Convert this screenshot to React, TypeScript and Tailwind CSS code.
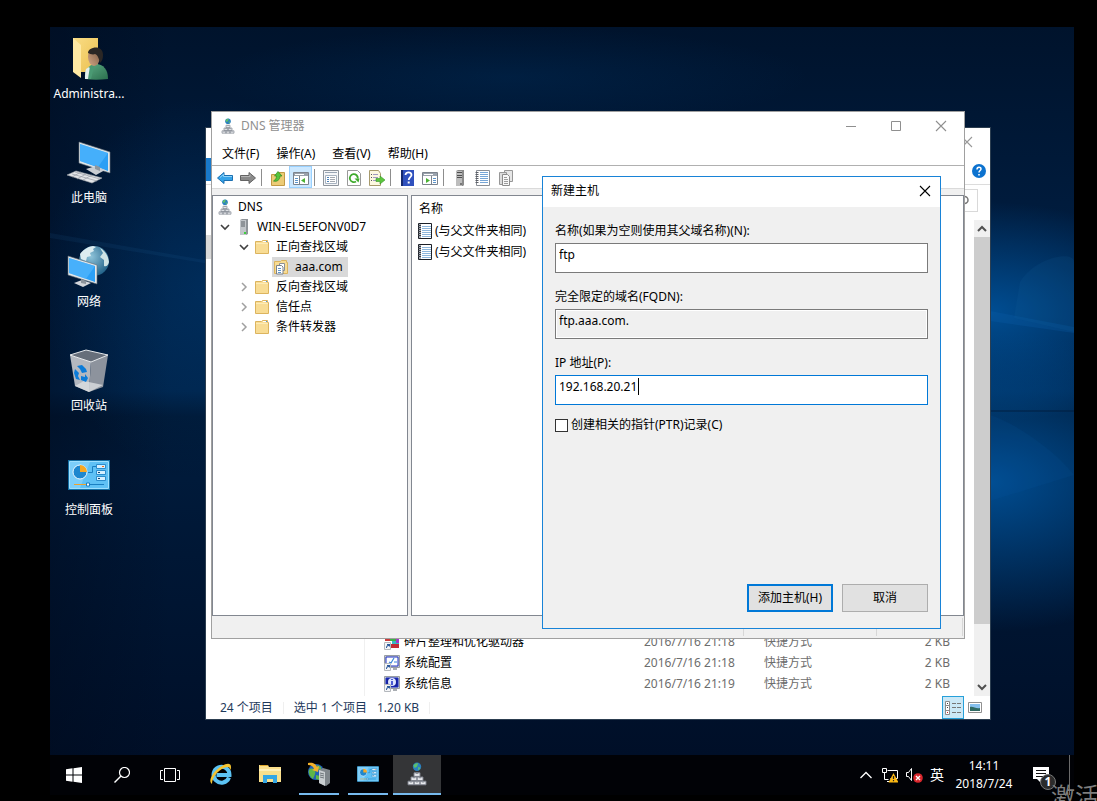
import type { ReactNode } from 'react';
import { clsx } from 'clsx';

type IconProps = { className?: string };

/* ---------- desktop icons ---------- */

function UserFolderIcon() {
  return (
    <svg viewBox="0 0 44 44" className="size-11">
      <defs>
        <linearGradient id="uf" x1="0" x2="1" y1="0" y2="1">
          <stop offset="0" stopColor="#f9dd86" />
          <stop offset="1" stopColor="#ecc04f" />
        </linearGradient>
        <linearGradient id="uj" x1="0" x2="1" y1="0" y2="1">
          <stop offset="0" stopColor="#5fae86" />
          <stop offset="1" stopColor="#2a6e4d" />
        </linearGradient>
        <linearGradient id="us" x1="0" x2="1" y1="1" y2="0">
          <stop offset="0" stopColor="#d3a786" />
          <stop offset="1" stopColor="#77563f" />
        </linearGradient>
      </defs>
      <path d="M6 1h25v34H6z" fill="url(#uf)" />
      <path d="M6 1l8 7v33l-8-6z" fill="#ffe9a3" />
      <path d="M18 42c-1-8 3-14 10-15 9 0 13 6 13 15-8 1-16 1-23 0z" fill="url(#uj)" />
      <path d="M19 32l3-2 3 4-2 8h-5c0-4 0-7 1-10z" fill="#e4f0ee" />
      <path d="M23 29l5-3-4 16h-3z" fill="#4a9a73" />
      <ellipse cx="27" cy="20" rx="6" ry="9" fill="url(#us)" />
      <path d="M21 16c0-6 15-9 15 2 0 4-1 6-3 8-1-4-2-8-5-9-2 1-5 0-7-1z" fill="#2b2725" />
    </svg>
  );
}

function ComputerIcon() {
  return (
    <svg viewBox="0 0 44 44" className="size-11">
      <path d="M12 1l31 10v21L12 22z" fill="#dfe6ea" stroke="#6b7780" strokeWidth=".6" />
      <path d="M13 3l28 9v18L13 20z" fill="#2b9ff5" />
      <path d="M13 3l28 9-10 14-18-6z" fill="#5bbcff" opacity=".55" />
      <path d="M19 28l10-3 9 4-9 5z" fill="#c9cdd2" />
      <path d="M28 24l5 2v4l-5-2z" fill="#8f979e" />
      <path d="M0 34l9-4 26 7-10 5z" fill="#e3e5e8" stroke="#9da2a8" strokeWidth=".6" />
      <path d="M5 33l25 7M8 31l25 7M10 38l9-5M16 39l9-5M5 36l9-5" stroke="#999ea6" strokeWidth=".7" />
    </svg>
  );
}

function NetworkIcon() {
  return (
    <svg viewBox="0 0 44 44" className="size-11">
      <defs>
        <radialGradient id="gl" cx=".4" cy=".35" r=".7">
          <stop offset="0" stopColor="#8fc4da" />
          <stop offset="1" stopColor="#1f5f86" />
        </radialGradient>
      </defs>
      <circle cx="27" cy="16" r="15" fill="url(#gl)" />
      <path d="M13 9c3-4 7-7 13-8l3 1-3 2 1 2-4 2 1 3-4 1-1 4-5-2z" fill="#dcecf0" />
      <path d="M33 3c5 3 8 7 9 14-1 4-3 5-5 4v-6l-4-3 3-4z" fill="#cfe4e6" />
      <path d="M1 11l29 9v19L1 30z" fill="#e2e7ea" stroke="#5f6b75" strokeWidth=".6" />
      <path d="M2 13l26 8v16L2 28z" fill="#2ba0f7" />
      <path d="M2 13l26 8-9 13-17-6z" fill="#63bfff" opacity=".5" />
      <path d="M7 38l8-3 9 3-8 4z" fill="#d3d6da" />
      <path d="M14 34l5 2v3l-5-1z" fill="#8d959c" />
    </svg>
  );
}

function RecycleBinIcon() {
  return (
    <svg viewBox="0 0 44 44" className="size-11">
      <path d="M3 6l21 6-2 31L8 37z" fill="#b4b8bf" />
      <path d="M24 12l17-6-5 32-14 5z" fill="#8d939d" />
      <path d="M3 6L19 1l22 5-17 7z" fill="#666e7a" stroke="#e6e9ec" strokeWidth="1" />
      <path d="M8 37l9-5 19 4-14 7z" fill="#dcdee1" opacity=".8" />
      <g fill="#0b7bd8">
        <path d="M10 17l5-1 4 4 1 3-5 1-2-4z" />
        <path d="M8 20l4 4-1 3 2 4-4-1-2-6z" />
        <path d="M14 27l4 1v-3l3 4-2 4-5-2z" />
      </g>
    </svg>
  );
}

function ControlPanelIcon({ className }: IconProps) {
  return (
    <svg viewBox="0 0 42 30" className={className}>
      <path d="M0 0h42v30H0z" fill="#1570a5" />
      <path d="M1.500 1.500h39v27h-39z" fill="#5fc1f5" stroke="#9fe0ff" />
      <path d="M2 2h20L12 28H2z" fill="#9adcff" opacity=".5" />
      <circle cx="12" cy="12" r="7" fill="#1e87cf" stroke="#eef8ff" />
      <path d="M12 12V5a7 7 0 0 1 7 7z" fill="#f7a823" />
      <path d="M20 12.500h4.500v-6H28" fill="none" stroke="#1a7fc2" />
      <path d="M28.500 4.500h9v4h-9zM28.500 10.500h9v4h-9zM28.500 16.500h9v4h-9z" fill="#d6f0ff" stroke="#2b8ccc" />
      <path d="M34 6h2v1h-2z" fill="#f26a1b" />
      <path d="M30 12h2v1h-2zM30 18h2v1h-2z" fill="#174a75" />
      <path d="M6 24.500h13" stroke="#f0a22a" />
      <path d="M21 24.500h15" stroke="#1a7fc2" />
      <path d="M18.500 23h3v3h-3z" fill="#fff" stroke="#1a7fc2" />
    </svg>
  );
}

/* ---------- small icons ---------- */

function DnsIcon({ className }: IconProps) {
  return (
    <svg viewBox="0 0 16 20" className={className}>
      <circle cx="8" cy="4" r="3.500" fill="#2a7fc0" />
      <path d="M5 3c1-2 3-2 4-2l-1 3-2 1zM9 4l2 1-2 2z" fill="#5cc06a" />
      <g fill="#e6e8ec" stroke="#7d828c" strokeWidth=".8">
        <path d="M5.500 9h5v3h-5zM3 12.500h5v3H3zM8 12.500h5v3H8zM.500 16h5v3h-5zM5.500 16h5v3h-5zM10.500 16h5v3h-5z" />
      </g>
      <path d="M7 9h2v1H7zM4.500 12.500h2v1h-2zM9.500 12.500h2v1h-2zM2 16h2v1H2zM7 16h2v1H7zM12 16h2v1h-2z" fill="#8c919a" />
    </svg>
  );
}

function ServerIcon({ className }: IconProps) {
  return (
    <svg viewBox="0 0 10 16" className={className}>
      <path d="M1 1l2-1h6v15l-2 1H1z" fill="#8f9499" />
      <path d="M1 1h6v15H1z" fill="#c2c6ca" />
      <path d="M2 3h4M2 5h4M2 7h4" stroke="#5d6368" />
      <path d="M5 13h2v2H5z" fill="#3ecf3e" />
    </svg>
  );
}

function FolderIcon() {
  return (
    <svg viewBox="0 0 16 16" className="size-4">
      <path d="M1.500 2.500h6l1-1h5v2h1v11h-13z" fill="#f8dc94" stroke="#dcb45e" />
      <path d="M9 2.500h4" stroke="#fff" />
      <path d="M12 2.500h1" stroke="#4f93d4" />
      <path d="M2 4.500h12" stroke="#fdebb6" />
    </svg>
  );
}

function ZoneIcon() {
  return (
    <svg viewBox="0 0 16 16" className="size-4">
      <path d="M1.500 2.500h6l1-1h5v2h1v11h-13z" fill="#f8dc94" stroke="#dcb45e" />
      <path d="M6.500 4.500h5v7h-5z" fill="#fff" stroke="#8a8f96" />
      <path d="M3.500 6.500h5l1.500 1.500v7H3.500z" fill="#fff" stroke="#7c828a" />
      <path d="M5 9.500h3M5 11.500h3M5 13.500h3" stroke="#5f94c8" />
    </svg>
  );
}

function NotebookIcon({ className }: IconProps) {
  return (
    <svg viewBox="0 0 16 16" className={className}>
      <path d="M1.500.500h13v15h-13z" fill="#fff" stroke="#1b1f27" />
      <path d="M2 1h2v14H2z" fill="#a8adb5" />
      <path d="M1 2.500h3M1 4.500h3M1 6.500h3M1 8.500h3M1 10.500h3M1 12.500h3" stroke="#3c4048" />
      <path d="M5 3.500h9M5 5.500h9M5 7.500h9M5 9.500h9M5 11.500h9M5 13.500h9" stroke="#8db6dc" />
    </svg>
  );
}

function Chevron({ open }: { open: boolean }) {
  return (
    <svg viewBox="0 0 10 10" className="size-2.5">
      {open ? (
        <path d="M1 3l4 4 4-4" fill="none" stroke="#404040" strokeWidth="1.600" />
      ) : (
        <path d="M3 1l4 4-4 4" fill="none" stroke="#a0a0a0" strokeWidth="1.500" />
      )}
    </svg>
  );
}

function CloseIcon({ className }: IconProps) {
  return (
    <svg viewBox="0 0 12 12" className={clsx('size-3', className)}>
      <path d="M1 1l10 10M11 1L1 11" stroke="currentColor" strokeWidth="1.100" />
    </svg>
  );
}

/* ---------- toolbar ---------- */

const toolbarIcons: Record<string, ReactNode> = {
  back: (
    <>
      <path d="M.500 8L7 2.500v3h8.500v5H7v3z" fill="#35a3e8" stroke="#1c6fb0" />
      <path d="M3 7.500L6.500 4.500v2H15" fill="none" stroke="#8fd3f8" />
    </>
  ),
  forward: (
    <>
      <path d="M15.500 8L9 2.500v3H.500v5H9v3z" fill="#8a8a8a" stroke="#636363" />
      <path d="M1 6.500h9v-2" fill="none" stroke="#b5b5b5" />
    </>
  ),
  up: (
    <>
      <path d="M1.500 4.500h6l1-2h6v13h-13z" fill="#eccb76" stroke="#c29a45" />
      <path d="M3.500 11c2-1 3-3 3-5h-2L8 1.500 12 6h-2c0 4-3 6-6.500 5z" fill="#55c43b" stroke="#2f8a21" strokeWidth=".7" />
    </>
  ),
  tree: (
    <>
      <path d="M.500 2.500h15v12H.500z" fill="#fff" stroke="#7c838d" />
      <path d="M1 3h14v3H1z" fill="#9aa2ac" />
      <path d="M2 4.500h9" stroke="#fff" />
      <path d="M6.500 6v9" stroke="#7c838d" />
      <path d="M2 8.500h3M2 10.500h3M2 12.500h3" stroke="#5e94c9" />
      <path d="M12 8v5l-4-2.500z" fill="#4bb233" />
    </>
  ),
  props: (
    <>
      <path d="M.500.500h15v15H.500z" fill="#f5f6f8" stroke="#8f959d" />
      <path d="M2 2.500h12" stroke="#9aa6b5" />
      <path d="M2.500 5.500h11v8h-11z" fill="#fff" stroke="#a8b3c0" />
      <path d="M4 7.500h2M4 9.500h2M4 11.500h2" stroke="#4b80b8" />
      <path d="M7 7.500h5M7 9.500h5M7 11.500h5" stroke="#a3a8b0" />
    </>
  ),
  refresh: (
    <>
      <path d="M1.500.500h10l3 3v12h-13z" fill="#fff" stroke="#9a9a9a" />
      <path d="M10 11.500a4 4 0 1 1 1.800-3" fill="none" stroke="#3fab2c" strokeWidth="1.800" />
      <path d="M8.500 8.500h5l-1 4z" fill="#3fab2c" />
    </>
  ),
  exportList: (
    <>
      <path d="M.500.500h9l2 3v12H.500z" fill="#fdf8e1" stroke="#a79a6c" />
      <path d="M2 4.500h1M2 7.500h1M2 10.500h1" stroke="#55585e" />
      <path d="M4 4.500h5M4 7.500h5M4 10.500h5" stroke="#a09ac0" />
      <path d="M7 8.500h4V6l5 4-5 4v-2.500H7z" fill="#5cc63e" stroke="#38962a" strokeWidth=".6" />
    </>
  ),
  help: (
    <>
      <path d="M2 0h13v16H2z" fill="#2f50bd" />
      <path d="M2 0h2v16H2z" fill="#15296f" />
      <path d="M6.500 5c0-3.500 6-3.500 6 0 0 2-2.800 2.500-2.800 5" fill="none" stroke="#fff" strokeWidth="1.800" />
      <path d="M8.700 11.500h2v2h-2z" fill="#fff" />
    </>
  ),
  pane: (
    <>
      <path d="M.500 2.500h15v12H.500z" fill="#fff" stroke="#7c838d" />
      <path d="M1 3h14v3H1z" fill="#9aa2ac" />
      <path d="M2 4.500h9" stroke="#fff" />
      <path d="M9.500 6v9" stroke="#7c838d" />
      <path d="M11 8.500h3M11 10.500h3M11 12.500h3" stroke="#5e94c9" />
      <path d="M4 8v5l4-2.500z" fill="#4bb233" />
    </>
  ),
  server: (
    <>
      <path d="M4 1l2-1h6v15l-1 1H4z" fill="#8b8b8b" />
      <path d="M4 1h6v15H4z" fill="#bdbdbd" />
      <path d="M5 2.500h5M5 5.500h5M5 7.500h5" stroke="#4e4e4e" />
      <path d="M8 13h2v2H8z" fill="#777" />
    </>
  ),
  list: (
    <>
      <path d="M1.500.500h13v15h-13z" fill="#fff" stroke="#8b8f96" />
      <path d="M.500 2.500h3M.500 4.500h3M.500 6.500h3M.500 8.500h3M.500 10.500h3M.500 12.500h3" stroke="#5a5e66" />
      <path d="M5 2.500h8M5 4.500h8M5 6.500h8M5 8.500h8M5 10.500h8M5 12.500h8" stroke="#78a6d6" />
    </>
  ),
  copy: (
    <>
      <path d="M6.500.500h8v11h-8z" fill="#e6e6e6" stroke="#979797" />
      <path d="M1.500 2.500h7v12h-7z" fill="#dcdcdc" stroke="#979797" />
      <path d="M4.500 4.500h5l2 2v9h-7z" fill="#f8f8f8" stroke="#8c8c8c" />
      <path d="M6 7.500h3M6 9.500h4M6 11.500h4M6 13.500h4" stroke="#9d9d9d" />
    </>
  ),
};

const toolbarGroups = [
  [
    { id: 'back', title: '后退' },
    { id: 'forward', title: '前进' },
  ],
  [
    { id: 'up', title: '向上' },
    { id: 'tree', title: '显示/隐藏控制台树', active: true },
  ],
  [
    { id: 'props', title: '属性' },
    { id: 'refresh', title: '刷新' },
    { id: 'exportList', title: '导出列表' },
  ],
  [
    { id: 'help', title: '帮助' },
    { id: 'pane', title: '显示/隐藏操作窗格' },
  ],
  [
    { id: 'server', title: '服务器' },
    { id: 'list', title: '列表' },
    { id: 'copy', title: '复制' },
  ],
];

/* ---------- data ---------- */

const desktopIcons = [
  { label: 'Administra...', icon: <UserFolderIcon /> },
  { label: '此电脑', icon: <ComputerIcon /> },
  { label: '网络', icon: <NetworkIcon /> },
  { label: '回收站', icon: <RecycleBinIcon /> },
  { label: '控制面板', icon: <ControlPanelIcon className="h-[30px] w-[42px]" /> },
];

const zones = [
  { label: '反向查找区域' },
  { label: '信任点' },
  { label: '条件转发器' },
];

const files = [
  { name: '碎片整理和优化驱动器', date: '2016/7/16 21:18', type: '快捷方式', size: '2 KB', icon: 'defrag' },
  { name: '系统配置', date: '2016/7/16 21:18', type: '快捷方式', size: '2 KB', icon: 'config' },
  { name: '系统信息', date: '2016/7/16 21:19', type: '快捷方式', size: '2 KB', icon: 'info' },
];

function ShortcutIcon({ kind }: { kind: string }) {
  return (
    <svg viewBox="0 0 16 16" className="size-4">
      {kind === 'defrag' ? (
        <>
          <path d="M1 1h7v6H1z" fill="#c93a3a" />
          <path d="M6 3h8v4H6z" fill="#3fae49" />
          <path d="M8 7h7v3H8z" fill="#38b7c4" />
          <path d="M12 4h3v5h-3z" fill="#a238c9" />
          <path d="M7 10h8v4H7z" fill="#c22a35" />
        </>
      ) : (
        <>
          <path d="M.500.500h15v12H.500z" fill="#c8ccd0" stroke="#989da3" />
          <path d="M2 2h12v9H2z" fill={kind === 'config' ? '#fff' : '#15209c'} stroke="#1c2fc4" />
          <path d="M9 13h4v2H9z" fill="#a9adb2" />
          {kind === 'config' ? (
            <path d="M5 7l2 1 3-5M10 7h3" fill="none" stroke="#3a86d8" strokeWidth="1.200" />
          ) : (
            <>
              <circle cx="8" cy="6" r="4" fill="#dfe6ff" />
              <path d="M8 3v1M8 5v4" stroke="#1c2fc4" strokeWidth="1.500" />
            </>
          )}
        </>
      )}
      <path d="M.500 8.500h6v7h-6z" fill="#f4f5f7" stroke="#b4b8bd" />
      <path d="M2 14c0-2 1-3 2-3H3v-1h3v3l-1-1c-2 0-2 1-2 2z" fill="#2b5a9c" />
    </svg>
  );
}

/* ---------- windows ---------- */

function ExplorerWindow() {
  return (
    <section
      aria-label="管理工具"
      className="absolute top-[100px] left-[155px] flex h-[593px] w-[786px] flex-col border border-[#2c3e50] bg-white"
    >
      <div className="flex h-7 items-center justify-end pr-[17px]">
        <button type="button" aria-label="关闭" className="text-[#999]">
          <CloseIcon />
        </button>
      </div>
      <div className="flex h-[29px] items-start justify-between border-b border-[#dcdcdc] pt-0.5 pr-1">
        <div className="h-[23px] w-14 bg-[#1979ca]" />
        <button type="button" aria-label="帮助" className="pt-1.5">
          <svg viewBox="0 0 14 14" className="size-3.5">
            <circle cx="7" cy="7" r="7" fill="#0c72cf" />
            <path d="M5 5.500c0-3 4-3 4-.500C9 6.500 7 6.500 7 8.500" fill="none" stroke="#fff" strokeWidth="1.500" />
            <path d="M6.200 10h1.600v1.500H6.200z" fill="#fff" />
          </svg>
        </button>
      </div>
      <div className="flex h-[35px] justify-end pt-1 pr-3">
        <div className="flex h-[23px] w-40 items-center justify-end border border-[#d9d9d9] pr-2">
          <svg viewBox="0 0 12 12" className="size-3">
            <circle cx="7.500" cy="5" r="3.500" fill="none" stroke="#777" strokeWidth="1.500" />
            <path d="M5 7.500L1 11" stroke="#777" strokeWidth="1.500" />
          </svg>
        </div>
      </div>

      <div className="flex min-h-0 flex-1">
        <div className="w-[159px] border-r border-[#f0f0f0] pt-[15px]">
          <div className="h-6 bg-[#d9d9d9]" />
        </div>
        <div className="flex flex-1 flex-col justify-end pr-6 pb-0.5 pl-[19px]">
          <table className="w-full table-fixed text-left">
            <tbody>
              {files.map((file) => (
                <tr key={file.name} className="h-[21px] text-[#6d6d6d]">
                  <td className="p-0 text-black">
                    <div className="flex items-center gap-1 whitespace-nowrap">
                      <ShortcutIcon kind={file.icon} />
                      {file.name}
                    </div>
                  </td>
                  <td className="w-[120px] p-0 whitespace-nowrap">{file.date}</td>
                  <td className="w-[110px] p-0">{file.type}</td>
                  <td className="w-[76px] p-0 text-right">{file.size}</td>
                </tr>
              ))}
            </tbody>
          </table>
        </div>
        <div className="flex w-4 flex-col items-center bg-[#f0f0f0]">
          <svg viewBox="0 0 10 10" className="mt-1 mb-[3px] size-2.5">
            <path d="M1 7l4-4 4 4" fill="none" stroke="#505050" strokeWidth="2" />
          </svg>
          <div className="h-[387px] w-full bg-[#cdcdcd]" />
          <svg viewBox="0 0 10 10" className="mt-auto mb-1 size-2.5">
            <path d="M1 3l4 4 4-4" fill="none" stroke="#505050" strokeWidth="2" />
          </svg>
        </div>
      </div>

      <div className="flex h-[23px] items-center pl-3.5 text-[#1e395b]">
        <span>24 个项目</span>
        <span className="mx-2.5 h-3 border-l border-[#efefef]" />
        <span>选中 1 个项目</span>
        <span className="ml-2.5">1.20 KB</span>
        <span className="mx-2.5 h-3 border-l border-[#efefef]" />
        <div className="ml-auto flex h-full items-center gap-1 pr-2">
          <button
            type="button"
            aria-label="详细信息"
            className="grid h-full w-[22px] place-items-center border border-[#26a0da] bg-[#cbe8f6]"
          >
            <svg viewBox="0 0 16 14" className="h-3.5 w-4">
              <path d="M.500.500h4v13h-4zM.500 4.500h4M.500 9.500h4" fill="#fff" stroke="#8b8b8b" />
              <path d="M2 2h1v1H2zM2 6h1v1H2z" fill="#444" />
              <path d="M2 11h1v1H2z" fill="#c22" />
              <path d="M7 2.500h4M12 2.500h4M7 6.500h4M12 6.500h4M7 11.500h4M12 11.500h4" stroke="#777" />
            </svg>
          </button>
          <button type="button" aria-label="大图标">
            <svg viewBox="0 0 14 11" className="h-[11px] w-3.5">
              <path d="M.500.500h13v10H.500z" fill="#fff" stroke="#909090" />
              <path d="M2 2h10v7H2z" fill="#86c0ee" />
              <path d="M2 5c3-1 6 2 10 1v3H2z" fill="#2f6a63" />
            </svg>
          </button>
        </div>
      </div>
    </section>
  );
}

function DnsManagerWindow() {
  return (
    <section
      aria-label="DNS 管理器"
      className="absolute top-[84px] left-[161px] flex h-[528px] w-[754px] flex-col border border-[#a0a0a0] bg-[#f0f0f0]"
    >
      <header className="flex h-7 items-center bg-white pr-[17px] pl-2">
        <DnsIcon className="h-4 w-4" />
        <h1 className="pl-[5px] text-[#8f8f8f]">DNS 管理器</h1>
        <div className="ml-auto flex items-center gap-[33px] text-[#8f8f8f]">
          <button type="button" aria-label="最小化">
            <svg viewBox="0 0 12 12" className="size-3">
              <path d="M1 6.500h10" stroke="currentColor" />
            </svg>
          </button>
          <button type="button" aria-label="最大化">
            <svg viewBox="0 0 12 12" className="size-3">
              <path d="M1.500 1.500h9v9h-9z" fill="none" stroke="currentColor" />
            </svg>
          </button>
          <button type="button" aria-label="关闭">
            <CloseIcon />
          </button>
        </div>
      </header>

      <nav className="flex h-[26px] items-center gap-[17px] border-b border-[#b0b0b0] bg-white pt-0.5 pl-2.5">
        <button type="button">文件(F)</button>
        <button type="button">操作(A)</button>
        <button type="button">查看(V)</button>
        <button type="button">帮助(H)</button>
      </nav>

      <div className="flex h-[23px] items-center border-b border-[#dadada] bg-white pl-px">
        {toolbarGroups.map((group, index) => (
          <div key={index} className="flex items-center">
            {index > 0 && <span className="mr-1 ml-0.5 h-[17px] w-px bg-[#8d8d8d]" />}
            {group.map((item) => (
              <button
                key={item.id}
                type="button"
                title={item.title}
                className={clsx(
                  'flex h-[22px] w-[23px] justify-center border pt-[3px]',
                  item.active ? 'border-[#99d1ff] bg-[#cce8ff]' : 'border-transparent',
                )}
              >
                <svg viewBox="0 0 16 16" className="size-4">
                  {toolbarIcons[item.id]}
                </svg>
              </button>
            ))}
          </div>
        ))}
      </div>

      <div className="flex min-h-0 flex-1 gap-[3px] pt-1.5">
        <ul className="w-[196px] border border-[#828790] bg-white pt-px">
          <li className="flex h-5 items-center gap-[5px] pl-1">
            <DnsIcon className="h-4 w-4" />
            DNS
          </li>
          <li className="flex h-5 items-center pl-[7px]">
            <Chevron open />
            <ServerIcon className="ml-[9px] h-4 w-2.5" />
            <span className="pl-2">WIN-EL5EFONV0D7</span>
          </li>
          <li className="flex h-5 items-center pl-[26px]">
            <Chevron open />
            <span className="pl-[5px]">
              <FolderIcon />
            </span>
            <span className="pl-1.5">正向查找区域</span>
          </li>
          <li className="flex h-5 pl-[59px]">
            <span className="flex items-center gap-1.5 bg-[#d9d9d9] pr-[5px] pl-px">
              <ZoneIcon />
              aaa.com
            </span>
          </li>
          {zones.map((zone) => (
            <li key={zone.label} className="flex h-5 items-center pl-[26px]">
              <Chevron open={false} />
              <span className="pl-[5px]">
                <FolderIcon />
              </span>
              <span className="pl-1.5">{zone.label}</span>
            </li>
          ))}
        </ul>

        <div className="flex-1 border border-[#828790] bg-white pt-px">
          <div className="flex h-6 items-center pl-[7px]">名称</div>
          {[0, 1].map((row) => (
            <div key={row} className="flex h-[21px] items-start gap-0.5 pt-0.5 pl-[5px]">
              <NotebookIcon className="size-4" />
              (与父文件夹相同)
            </div>
          ))}
        </div>
      </div>

      <footer className="flex h-[22px] justify-end py-0.5 pr-px">
        <div className="w-[133px] border-l border-[#d7d7d7]" />
        <div className="w-[87px] border-x border-[#d7d7d7]" />
      </footer>
    </section>
  );
}

function NewHostDialog() {
  return (
    <form
      aria-label="新建主机"
      className="absolute top-[149px] left-[492px] flex h-[453px] w-[399px] flex-col border border-[#1883d7] bg-[#f0f0f0]"
    >
      <header className="flex h-[30px] items-center justify-between bg-white pr-[9px] pb-0.5 pl-2">
        <h2>新建主机</h2>
        <button type="button" aria-label="关闭">
          <CloseIcon />
        </button>
      </header>

      <div className="flex flex-1 flex-col px-3 pt-4 pb-4">
        <div className="flex h-[66px] flex-col">
          <label htmlFor="host" className="h-5 leading-4">
            名称(如果为空则使用其父域名称)(N):
          </label>
          <input id="host" defaultValue="ftp" className="h-[30px] border border-[#7a7a7a] bg-white px-[3px] pb-2" />
        </div>
        <div className="flex h-[66px] flex-col">
          <label htmlFor="fqdn" className="h-5 leading-4">
            完全限定的域名(FQDN):
          </label>
          <input
            id="fqdn"
            readOnly
            value="ftp.aaa.com."
            className="h-[30px] border border-[#7a7a7a] bg-[#f0f0f0] px-[3px] pb-2 inset-ring inset-ring-white"
          />
        </div>
        <div className="flex h-[62px] flex-col">
          <label htmlFor="ip" className="h-5 leading-4">
            IP 地址(P):
          </label>
          <div className="relative flex">
            <input
              id="ip"
              defaultValue="192.168.20.21"
              className="h-[30px] w-full border border-[#0078d7] bg-white px-[3px] pb-2"
            />
            <span className="absolute top-[3px] left-[83px] h-[17px] w-px bg-black" />
          </div>
        </div>
        <label className="flex items-center gap-[3px] leading-4">
          <input type="checkbox" className="size-[13px] appearance-none border border-[#333] bg-white" />
          创建相关的指针(PTR)记录(C)
        </label>

        <div className="mt-auto flex justify-end gap-[9px]">
          <button type="submit" className="h-7 w-[86px] border-2 border-[#0078d7] bg-[#e1e1e1]">
            添加主机(H)
          </button>
          <button type="button" className="h-7 w-[86px] border border-[#adadad] bg-[#e1e1e1]">
            取消
          </button>
        </div>
      </div>
    </form>
  );
}

/* ---------- taskbar ---------- */

const launchers = [
  {
    title: 'Internet Explorer',
    state: '',
    icon: (
      <svg viewBox="0 0 24 24" className="size-6">
        <path
          d="M20 15.500A8 8 0 1 1 20.500 13H7.500"
          fill="none"
          stroke="#5cc3f4"
          strokeWidth="4"
        />
        <path d="M3 22C-2 19 5 8 13 4c5-3 9-3 9 1 0 1 0 2-1 3 0-4-3-3-6-2C8 9 3 16 3 22z" fill="#f5c430" />
      </svg>
    ),
  },
  {
    title: '文件资源管理器',
    state: '',
    icon: (
      <svg viewBox="0 0 22 20" className="h-5 w-[22px]">
        <path d="M0 1h9l1 2h12v15H0z" fill="#fbe08c" />
        <path d="M1 1h8v1H1z" fill="#e0a92f" />
        <path d="M0 5h22v2H0z" fill="#fff0b8" />
        <path d="M4 11h14v8h-4v-4H8v4H4z" fill="#36a7e4" />
      </svg>
    ),
  },
  {
    title: '服务器管理器',
    state: 'running',
    icon: (
      <svg viewBox="0 0 24 24" className="size-6">
        <circle cx="9" cy="10" r="8" fill="#2261b5" />
        <path d="M2 8c2-2 5-2 6 1s-1 5-2 8c-3-2-5-6-4-9zM9 13l4 1-1 4-3-1zM10 3l4 2v3l-4-1z" fill="#5fb548" />
        <path d="M1 1c5-1 8 1 9 4l2-1-1 6-6-2 2-1C6 4 4 3 1 3z" fill="#f2b12b" />
        <path d="M12 8l4-2 7 2v13l-4 3-7-3z" fill="#7f868b" />
        <path d="M12 8l6 2v14l-6-3z" fill="#c9ced1" />
        <path d="M13 11l4 1M13 13l4 1M13 15l4 1" stroke="#6f767b" />
      </svg>
    ),
  },
  { title: '管理工具', state: 'running', icon: <ControlPanelIcon className="h-4 w-[22px]" /> },
  { title: 'DNS', state: 'active', icon: <DnsIcon className="h-6 w-5" /> },
];

function Taskbar() {
  return (
    <footer className="flex h-10 items-stretch bg-[#010206] text-white">
      <button type="button" aria-label="开始" className="grid w-12 place-items-center">
        <svg viewBox="0 0 16 16" className="size-4">
          <path d="M0 2.300l6.500-1v6.200H0zM7.500 1.200L16 0v7.500H7.500zM0 8.500h6.500v6.200l-6.500-1zM7.500 8.500H16V16l-8.500-1.200z" fill="#fff" />
        </svg>
      </button>
      <button type="button" aria-label="搜索" className="grid w-12 place-items-center">
        <svg viewBox="0 0 16 16" className="size-4">
          <circle cx="10.500" cy="5.500" r="5" fill="none" stroke="#fff" strokeWidth="1.200" />
          <path d="M7 9L.500 15.500" stroke="#fff" strokeWidth="1.400" />
        </svg>
      </button>
      <button type="button" aria-label="任务视图" className="grid w-12 place-items-center">
        <svg viewBox="0 0 20 16" className="h-4 w-5">
          <path d="M4.500 1.500h11v13h-11zM3 3.500H.500v9H3M17 3.500h2.500v9H17" fill="none" stroke="#fff" />
        </svg>
      </button>
      <div className="flex gap-px pl-[3px]">
        {launchers.map((app) => (
          <button
            key={app.title}
            type="button"
            title={app.title}
            className={clsx('flex w-12 flex-col items-center', app.state === 'active' && 'bg-[#343537]')}
          >
            <span className="flex flex-1 items-center">{app.icon}</span>
            <span
              className={clsx(
                'h-0.5',
                app.state === 'active' ? 'w-12' : 'w-10',
                app.state && 'bg-[#76b9ed]',
              )}
            />
          </button>
        ))}
      </div>

      <div className="ml-auto flex items-center">
        <button type="button" aria-label="显示隐藏的图标">
          <svg viewBox="0 0 12 8" className="h-2 w-3">
            <path d="M.500 7L6 1.500 11.500 7" fill="none" stroke="#fff" strokeWidth="1.300" />
          </svg>
        </button>
        <svg viewBox="0 0 16 16" className="ml-2.5 size-4">
          <path d="M5.500 3.500h10v8h-7M.500 1.500h4v4h-4zM2.500 5.500v7h4M5 14.500h4" fill="none" stroke="#fff" />
          <path d="M11.500 6l5 9.500h-10z" fill="#fdb913" />
          <path d="M11.500 9v3M11.500 13v1.200" stroke="#222" strokeWidth="1.200" />
        </svg>
        <svg viewBox="0 0 17 16" className="ml-2 h-4 w-[17px]">
          <path d="M.500 5.500h2l3-4v12l-3-4h-2z" fill="none" stroke="#fff" />
          <circle cx="12" cy="11" r="4.800" fill="#d9262c" />
          <path d="M10 9l4 4M14 9l-4 4" stroke="#fff" strokeWidth="1.300" />
        </svg>
        <span className="ml-[7px] text-sm">英</span>
        <div className="ml-2 w-[64px] text-center leading-[18px] whitespace-nowrap">
          <div>14:11</div>
          <div>2018/7/24</div>
        </div>
        <div className="relative ml-[17px]">
          <svg viewBox="0 0 16 16" className="size-4">
            <path d="M0 0h16v12H8v4l-4-4H0z" fill="#fff" />
            <path d="M3 3.500h10M3 6.500h10M3 9.500h7" stroke="#111" />
          </svg>
          <span className="absolute top-[7px] left-[7px] grid size-4 place-items-center rounded-full border border-[#777] bg-[#2b2b2b] leading-none font-bold">
            1
          </span>
        </div>
        <div className="mr-1 ml-5 h-10 border-l border-[#6b6b6b]" />
      </div>
    </footer>
  );
}

/* soft light beams of the desktop background */
function Wallpaper() {
  return (
    <svg viewBox="0 0 1024 728" preserveAspectRatio="none" className="absolute inset-0 size-full" aria-hidden="true">
      <defs>
        <linearGradient id="sky" x1="0" x2="0" y1="0" y2="1">
          <stop offset="0" stopColor="#00132c" />
          <stop offset=".3" stopColor="#001d40" />
          <stop offset=".5" stopColor="#002248" />
          <stop offset=".535" stopColor="#001733" />
          <stop offset=".62" stopColor="#001a3a" />
          <stop offset="1" stopColor="#000f28" />
        </linearGradient>
        <radialGradient id="glow">
          <stop offset="0" stopColor="#0059a6" />
          <stop offset="1" stopColor="#0059a6" stopOpacity="0" />
        </radialGradient>
        <linearGradient id="edge" x1="0" x2="1" y1="0" y2="0">
          <stop offset="0" stopColor="#000a1c" stopOpacity=".45" />
          <stop offset="1" stopColor="#000a1c" stopOpacity="0" />
        </linearGradient>
      </defs>
      <path d="M0 0h1024v728H0z" fill="url(#sky)" />
      <path d="M0 0h120v728H0z" fill="url(#edge)" />
      <ellipse cx="460" cy="50" rx="300" ry="50" fill="url(#glow)" opacity=".14" />
      <ellipse cx="160" cy="260" rx="170" ry="190" fill="url(#glow)" opacity=".24" />
      <ellipse cx="940" cy="285" rx="190" ry="110" fill="url(#glow)" opacity=".8" />
      <ellipse cx="940" cy="455" rx="230" ry="150" fill="url(#glow)" opacity=".8" />
      <path d="M0 206l160 28v3L0 211z" fill="#2a72b4" opacity=".1" />
      <path d="M940 284l84 16v6l-84-12z" fill="#0c66b0" opacity=".22" />
      <path d="M970 255c15-25 54-32 54-20v70l-60-14z" fill="#1c68a8" opacity=".12" />
      <path d="M940 383h84v2h-84z" fill="#001a38" opacity=".4" />
      <path d="M940 388c20 6 60 30 84 60l-84 26z" fill="#0b62ac" opacity=".1" />
    </svg>
  );
}

export default function App() {
  return (
    <div className="relative flex min-h-screen flex-col overflow-hidden bg-black pt-[27px] pr-[23px] pb-1.5 pl-[50px] font-['Noto_Sans','Noto_Sans_CJK_SC',sans-serif] text-xs leading-4 text-black">
      <main className="relative flex-1">
        <Wallpaper />
        <div className="relative flex w-[78px] flex-col gap-[39px] pt-2.5">
          {desktopIcons.map((item) => (
            <button key={item.label} type="button" className="flex flex-col items-center gap-[5px] text-white">
              <span className="grid h-11 place-items-center">{item.icon}</span>
              {item.label}
            </button>
          ))}
        </div>
        <ExplorerWindow />
        <DnsManagerWindow />
        <NewHostDialog />
      </main>
      <Taskbar />
      <div className="absolute right-[-2px] bottom-[-7px] text-2xl leading-6 text-[#7d7d7d]">激活</div>
    </div>
  );
}
